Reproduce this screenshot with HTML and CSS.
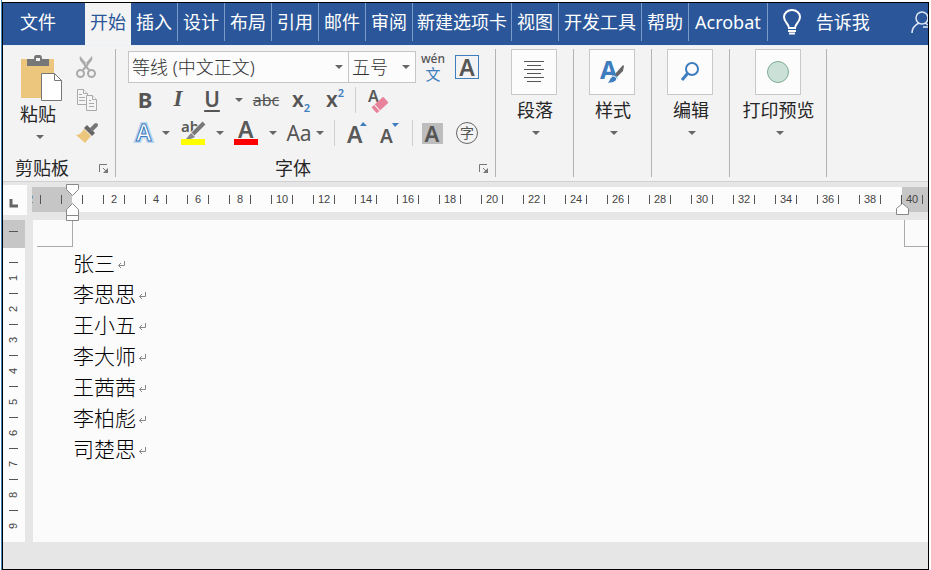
FILE: index.html
```html
<!DOCTYPE html>
<html lang="zh-CN">
<head>
<meta charset="utf-8">
<title>文档</title>
<link rel="stylesheet" href="styles.css">
</head>
<body>
<div class="window">
  <nav class="tabs">
    <button class="tab tab-file">文件</button>
    <button class="tab tab-active">开始</button>
    <button class="tab">插入</button>
    <button class="tab">设计</button>
    <button class="tab">布局</button>
    <button class="tab">引用</button>
    <button class="tab">邮件</button>
    <button class="tab">审阅</button>
    <button class="tab tab-tight">新建选项卡</button>
    <button class="tab">视图</button>
    <button class="tab">开发工具</button>
    <button class="tab">帮助</button>
    <button class="tab tab-loose">Acrobat</button>
    <button class="tell-me">
      <svg width="20" height="26" viewBox="0 0 20 26" fill="none" stroke="#fff" stroke-width="2"><path d="M7 19c0-4-5-6-5-11a8 7 0 0 1 16 0c0 5-5 7-5 11zM6 22h8"/><path d="M7 24.500h6"/></svg>
      告诉我
    </button>
    <button class="account" aria-label="账户">
      <svg width="24" height="24" viewBox="0 0 24 24" fill="none" stroke="#dfe8f5" stroke-width="1.500"><circle cx="11" cy="8" r="6"/><path d="M1 23c0-5 3-8 7-10M14 13l3 2M12 17h8"/></svg>
    </button>
  </nav>

  <div class="ribbon">
    <section class="group clipboard">
      <div class="group-body">
        <button class="paste">
          <svg width="42" height="46" viewBox="0 0 42 46"><path fill="#edc67d" d="M0 3h33v39H0z"/><path fill="#777" d="M6 3h7c0-4 1-4 4-4s4 0 4 4h7v7H6z"/><path fill="#f3f3f3" d="M15 2h4v3h-4z"/><path fill="#fff" stroke="#777" d="M20.500 17.500h13l7 7v20h-20z"/><path fill="none" stroke="#777" d="M33.500 17.500v7h7"/></svg>
          <span>粘贴</span>
          <i class="arrow"></i>
        </button>
        <div class="clip-tools">
          <button aria-label="剪切"><svg width="22" height="22" viewBox="0 0 22 22" fill="none" stroke="#aaa" stroke-width="2"><circle cx="4.500" cy="17.500" r="3.500"/><circle cx="15.500" cy="17.500" r="3.500"/><path d="m7 14 5-6M13 14 8 8"/><path fill="#aaa" stroke="none" d="M4 0c-1 3 0 5 4 9l2-2zM16 0c1 3 0 5-4 9l-2-2z"/></svg></button>
          <button aria-label="复制"><svg width="22" height="22" viewBox="0 0 22 22" fill="#f5f5f5" stroke="#aaa"><path d="M1.500.500h6l4 4v11h-10z"/><path d="M7.500.500v4h4M3 5.500h3M3 8.500h6M3 11.500h6"/><path d="M10.500 6.500h6l4 4v11h-10z"/><path d="M16.500 6.500v4h4M13 11.500h2M13 14.500h5M13 17.500h5"/></svg></button>
          <button aria-label="格式刷"><svg width="24" height="22" viewBox="0 0 24 22"><path fill="#edc67d" d="m8 7 7 7-6 7-9-8c4 0 6-3 8-6z"/><path fill="#666" d="m8 6 3-3 8 8-3 3z"/><path stroke="#777" stroke-width="4" stroke-linecap="round" d="m16 7 4-4"/></svg></button>
        </div>
      </div>
      <footer class="group-footer"><span>剪贴板</span><button class="launcher" aria-label="剪贴板设置"><svg width="10" height="10" viewBox="0 0 10 10" fill="none" stroke="#777"><path d="M.500 8V.500H8M4 4l4 4"/><path fill="#777" stroke="none" d="M9 4v5H4z"/></svg></button></footer>
    </section>

    <section class="group font">
      <div class="group-body font-body">
        <div class="row row-1">
          <label class="field"><select aria-label="字体"><option>等线 (中文正文)</option></select><i class="arrow"></i></label>
          <label class="field"><select aria-label="字号"><option>五号</option></select><i class="arrow"></i></label>
          <button class="pinyin"><span>wén</span><b>文</b></button>
          <button><span class="boxed">A</span></button>
        </div>
        <div class="row row-2">
          <button class="bold">B</button>
          <button class="italic">I</button>
          <button class="underline">U</button>
          <button aria-label="下划线选项"><i class="arrow"></i></button>
          <button class="strike">abc</button>
          <button class="script">x<sub>2</sub></button>
          <button class="script">x<sup>2</sup></button>
          <i class="divider"></i>
          <button aria-label="清除格式"><svg width="22" height="24" viewBox="0 0 22 24"><text x="1" y="14" class="icon-letter" font-size="16">A</text><g transform="rotate(-42 13 17)"><rect x="5" y="13" width="16" height="8" rx="1" fill="#e8829b"/><path stroke="#f3f3f3" d="M9 13v8"/></g></svg></button>
        </div>
        <div class="row row-3">
          <button aria-label="文本效果"><svg width="24" height="26" viewBox="0 0 24 26"><text x="4" y="21" class="glow">A</text><text x="4" y="21" class="outlined">A</text></svg></button>
          <button aria-label="文本效果选项"><i class="arrow"></i></button>
          <button aria-label="突出显示"><svg width="26" height="26" viewBox="0 0 26 26"><path fill="#ff0" d="M1 19h24v6H1z"/><text x="1" y="12" class="icon-letter" font-size="15">ab</text><path stroke="#f3f3f3" stroke-width="6" d="M23 4 12 15"/><path stroke="#777" stroke-width="4" d="M24 3 13 14"/><path fill="#888" d="m11 13 4 4-4 2H6z"/></svg></button>
          <button aria-label="突出显示选项"><i class="arrow"></i></button>
          <button aria-label="字体颜色"><svg width="24" height="26" viewBox="0 0 24 26"><text x="4" y="18" class="icon-letter" font-size="23">A</text><path fill="red" d="M0 19h24v6H0z"/></svg></button>
          <button aria-label="字体颜色选项"><i class="arrow"></i></button>
          <button class="case">Aa</button>
          <button aria-label="更改大小写选项"><i class="arrow"></i></button>
          <i class="divider"></i>
          <button aria-label="增大字号"><svg width="22" height="26" viewBox="0 0 22 26"><text x="0" y="23" class="icon-letter" font-size="23">A</text><path fill="#3e7dbe" d="m16 2 4 4h-7z"/></svg></button>
          <button aria-label="减小字号"><svg width="22" height="26" viewBox="0 0 22 26"><text x="2" y="23" class="icon-letter" font-size="19">A</text><path fill="#3e7dbe" d="M14 3h7l-4 4z"/></svg></button>
          <i class="divider"></i>
          <button><span class="shaded">A</span></button>
          <button><span class="circled">字</span></button>
        </div>
      </div>
      <footer class="group-footer"><span>字体</span><button class="launcher" aria-label="字体设置"><svg width="10" height="10" viewBox="0 0 10 10" fill="none" stroke="#777"><path d="M.500 8V.500H8M4 4l4 4"/><path fill="#777" stroke="none" d="M9 4v5H4z"/></svg></button></footer>
    </section>

    <section class="group"><button class="tile">
      <span class="tile-icon"><svg width="24" height="24" viewBox="0 0 24 24" stroke="#555"><path d="M2 1.500h20M5 5.500h14M2 9.500h20M5 13.500h14M2 17.500h20M5 21.500h14"/></svg></span>
      <span>段落</span><i class="arrow"></i></button></section>
    <section class="group"><button class="tile">
      <span class="tile-icon"><svg width="26" height="26" viewBox="0 0 26 26"><text x="1" y="20" class="style-letter">A</text><path fill="#3e7dbe" stroke="#fcfcfc" d="M7 24c4 0 3-7 8-7 5 2 3 8-8 7z"/><path fill="#666" d="m16 15 8-9 1 1-1 5-6 6z"/></svg></span>
      <span>样式</span><i class="arrow"></i></button></section>
    <section class="group"><button class="tile">
      <span class="tile-icon"><svg width="24" height="24" viewBox="0 0 24 24" fill="none" stroke="#3e7dbe" stroke-width="2"><circle cx="14" cy="9" r="6"/><path stroke-width="3" d="m10 13-6 7"/></svg></span>
      <span>编辑</span><i class="arrow"></i></button></section>
    <section class="group"><button class="tile tile-wide">
      <span class="tile-icon"><svg width="24" height="24" viewBox="0 0 24 24"><circle cx="12" cy="12" r="10.500" fill="#cbe0d7" stroke="#7cad98"/></svg></span>
      <span>打印预览</span><i class="arrow"></i></button></section>
  </div>

  <main class="workspace">
    <div class="corner"><button aria-label="制表符"><svg width="10" height="10" viewBox="0 0 10 10"><path fill="none" stroke="#666" stroke-width="3" d="M2 1v7h7"/></svg></button></div>
    <div class="ruler-wrap">
      <div class="ruler-h" id="ruler-h"></div>
      <svg class="marker marker-left" width="13" height="38" viewBox="0 0 13 38" fill="#fff" stroke="#888"><path d="M.500.500h12v5l-6 6-6-6zM.500 31.500v-6l6-6 6 6v6zM.500 31.500h12v5H.500z"/></svg>
      <svg class="marker marker-right" width="13" height="12" viewBox="0 0 13 12" fill="#fff" stroke="#888"><path d="M.500 11.500v-6l6-5 6 5v6z"/></svg>
    </div>
    <div class="ruler-v" id="ruler-v"></div>
    <article class="page">
      <div class="crop-marks"><i class="crop-left"></i><i class="crop-right"></i></div>
      <div class="text" id="text"></div>
    </article>
  </main>
</div>
<script src="script.js"></script>
</body>
</html>
```
FILE: styles.css
```css
* { box-sizing: border-box; }
html { background: #fff; }
body {
  margin: 0 2px 0 1px;
  padding-top: 2px;
  border-left: 1px solid #3f87bf;
  min-height: 100vh;
  display: flex;
  color: #262626;
  font: 18px/24px "Noto Sans", "Noto Sans CJK SC", sans-serif;
}
button {
  padding: 0;
  border: 0;
  background: none;
  color: inherit;
  font: inherit;
}
svg { display: block; flex: none; overflow: visible; }
.window {
  flex: 1;
  min-width: 0;
  display: flex;
  flex-direction: column;
  border: 1px solid #000;
  background: #e6e6e6;
  overflow: hidden;
}

/* Tabs */
.tabs {
  display: flex;
  align-items: flex-start;
  height: 42px;
  background: #2b579a;
  color: #fff;
}
.tab {
  flex: none;
  height: 38px;
  padding: 0 5px;
  border-right: 1px solid #7c9bc8;
  white-space: nowrap;
}
.tab-tight { padding: 0 4px; }
.tab-loose { padding: 0 6px; }
.tab-file { width: 82px; padding: 0 28px 0 16px; border: 0; }
.tab-active {
  width: 46px;
  height: 42px;
  padding: 0 4px 4px;
  border: 0;
  background: #f3f3f3;
  color: #2b579a;
}
.tell-me {
  display: flex;
  align-items: center;
  gap: 14px;
  height: 38px;
  padding-left: 14px;
  white-space: nowrap;
}
.account {
  width: 17px;
  height: 38px;
  margin-left: auto;
  display: flex;
  align-items: center;
  overflow: hidden;
}

/* Ribbon */
.ribbon {
  display: flex;
  padding: 3px 0 4px;
  border-top: 1px solid #e8f2f8;
  border-bottom: 1px solid #d0d0d0;
  background: #f3f3f3;
}
.group {
  display: flex;
  flex-direction: column;
  height: 128px;
  flex: none;
  border-right: 1px solid #b4b4b4;
}
.clipboard { width: 113px; }
.font { width: 380px; padding-left: 12px; }
.group-body { display: flex; flex: 1; }
.group-footer {
  display: flex;
  align-items: center;
  justify-content: space-between;
  height: 24px;
  margin-bottom: -3px;
  padding: 0 6px 0 12px;
}
.group-footer .launcher { padding-top: 2px; }
.font .group-footer { padding: 0 6px 0 147px; }
.arrow {
  display: block;
  border: 4px solid transparent;
  border-top-color: #666;
  border-bottom: 0;
}
.paste {
  display: flex;
  flex-direction: column;
  align-items: center;
  width: 70px;
  padding-top: 7px;
}
.paste svg { margin-left: 8px; }
.paste .arrow, .tile .arrow { margin: 9px 0 0 4px; }
.clip-tools {
  display: flex;
  flex-direction: column;
  gap: 11px;
  padding: 7px 0 0 3px;
}
.font-body { flex-direction: column; padding-top: 2px; }
.row { display: grid; align-items: center; }
.row > * {
  display: flex;
  align-items: center;
  justify-content: center;
  height: 100%;
  color: #555;
}
.row-1 { grid-template-columns: 221px 67px 34px 34px; height: 32px; }
.row-2 { grid-template-columns: 34px 32px 36px 18px 36px 34px 34px 6px 40px; height: 34px; }
.row-3 { grid-template-columns: 32px 12px 42px 12px 40px 14px 38px 4px 24px 24px 38px 8px 32px 38px; height: 32px; }
.field {
  border: 1px solid #c6c6c6;
  background: #fcfcfc;
  padding: 0 5px 0 3px;
}
.field + .field { border-left: 0; }
.field select {
  flex: 1;
  min-width: 0;
  height: 30px;
  padding: 0;
  border: 0;
  background: none;
  appearance: none;
  color: #333;
  font: inherit;
  font-weight: 300;
}
.pinyin {
  flex-direction: column;
  font-size: 12px;
  line-height: 14px;
}
.pinyin span { font-weight: 500; }
.pinyin b { font-size: 15px; line-height: 16px; font-weight: 400; color: #3e7dbe; }
.boxed {
  width: 24px;
  border: 1px solid #3e7dbe;
  font-size: 23px;
  line-height: 22px;
  font-weight: 600;
}
.bold { font-weight: 700; font-size: 22px; }
.italic { font: italic 700 23px "Liberation Serif", serif; }
.row .bold, .row .italic, .row .underline { padding-bottom: 2px; }
.underline { font-size: 21px; font-weight: 600; text-decoration: underline; text-underline-offset: 3px; text-decoration-thickness: 2px; }
.strike { text-decoration: line-through; font-size: 16px; }
.script { font-size: 21px; font-weight: 600; }
.row .script { padding-bottom: 2px; }
.script sub, .script sup { font-size: 11px; line-height: 11px; color: #3e7dbe; }
.script sub { padding-top: 16px; }
.script sup { padding-bottom: 14px; }
.divider::before { content: ""; width: 1px; height: 26px; background: #cfcfcf; }
.icon-letter { font-family: "Noto Sans", sans-serif; font-weight: 600; fill: #595959; }
.glow, .outlined { font: 600 23px "Noto Sans", sans-serif; }
.glow { fill: none; stroke: #b9d5f2; stroke-width: 4px; }
.outlined { fill: #fff; stroke: #3e7dbe; stroke-width: 1px; }
.style-letter { font: 700 25px "Noto Sans", sans-serif; fill: #3e7dbe; }
.case { font-size: 21px; }
.shaded {
  width: 21px;
  background: #bdbdbd;
  font-size: 22px;
  line-height: 21px;
  font-weight: 600;
}
.circled {
  width: 22px;
  height: 22px;
  border: 1px solid #666;
  border-radius: 50%;
  font-size: 14px;
  line-height: 19px;
}
.tile {
  display: flex;
  flex-direction: column;
  align-items: center;
  width: 76px;
}
.group:has(.tile) { width: 78px; }
.group:has(.tile-wide) { width: 97px; }
.tile-wide { width: 95px; }
.tile > span:nth-child(2) { margin: 3px 0 0 2px; }
.tile-icon {
  display: flex;
  align-items: center;
  justify-content: center;
  width: 46px;
  height: 46px;
  border: 1px solid #c8c8c8;
  background: #fcfcfc;
}

/* Rulers and document */
.workspace {
  flex: 1;
  display: grid;
  grid-template: 38px 322px 1fr / 30px 1fr;
}
.corner {
  display: flex;
  width: 24px;
  height: 30px;
  margin-top: 3px;
  padding: 5px 0 0 6px;
  background: #fcfcfc;
}
.ruler-wrap { position: relative; min-width: 0; }
.ruler-h {
  display: flex;
  height: 25px;
  margin: 5px 0 0 -1px;
  overflow: hidden;
  background: linear-gradient(90deg, #c6c6c6 40px, #fcfcfc 40px, #fcfcfc 870px, #c6c6c6 870px);
  font: 11px/25px "Liberation Sans", sans-serif;
  color: #444;
}
.cell-h {
  flex: none;
  display: flex;
  align-items: center;
  width: 42px;
  padding: 0 10px;
}
.cell-h:first-child { margin-left: -23px; }
.cell-h span { flex: 1; text-align: center; }
.cell-h::before, .cell-h::after {
  content: "";
  width: 1px;
  height: 9px;
  background: #555;
}
.marker { position: absolute; }
.marker-left { left: 33px; top: 2px; }
.marker-right { left: 863px; top: 21px; }
.ruler-v {
  width: 22px;
  padding: 11px 2px 0 0;
  background: linear-gradient(#c6c6c6 28px, #fcfcfc 28px);
  font: 11px/20px "Liberation Sans", sans-serif;
  color: #444;
}
.cell-v {
  display: flex;
  flex-direction: column;
  align-items: center;
  height: 31px;
}
.cell-v::before { content: ""; width: 9px; height: 1px; background: #555; }
.cell-v span {
  flex: 1;
  writing-mode: vertical-rl;
  transform: rotate(180deg);
  text-align: center;
}
.page { background: #fbfbfb; min-width: 0; }
.crop-marks { display: flex; height: 27px; padding-left: 4px; }
.crop-left { width: 36px; border: solid #aaa; border-width: 0 1px 1px 0; }
.crop-right { flex: 1; margin-left: 831px; border: solid #aaa; border-width: 0 0 1px 1px; }
.text {
  padding-left: 40px;
  color: #000;
  font: 300 21px/31px "Noto Sans CJK SC", sans-serif;
}
.text p { display: flex; align-items: center; gap: 2px; margin: 0; }
.text svg { margin-top: 5px; }
```
FILE: script.js
```js
const rulerH = document.getElementById("ruler-h");
const labelsH = ["2", ""];
for (let n = 2; n <= 40; n += 2) labelsH.push(n);
rulerH.innerHTML = labelsH.map(n => `<div class="cell-h"><span>${n}</span></div>`).join("");

const labelsV = ["", 1, 2, 3, 4, 5, 6, 7, 8, 9];
document.getElementById("ruler-v").innerHTML =
  labelsV.map(n => `<div class="cell-v"><span>${n}</span></div>`).join("");

const mark = '<svg width="9" height="8" viewBox="0 0 9 8" fill="none" stroke="#888"><path d="M7.5 0v4.500H1.500M4 2 1.500 4.500 4 7"/></svg>';
const names = ["张三", "李思思", "王小五", "李大师", "王茜茜", "李柏彪", "司楚思"];
document.getElementById("text").innerHTML =
  names.map(name => `<p>${name}${mark}</p>`).join("");
```
